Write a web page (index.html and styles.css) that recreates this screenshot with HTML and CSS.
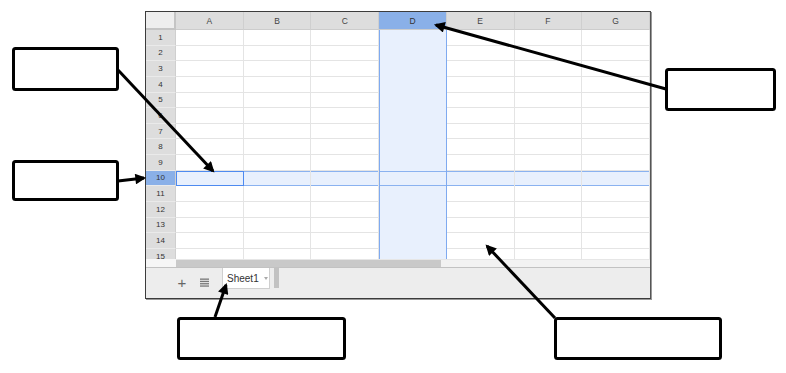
FILE: index.html
```html
<!DOCTYPE html>
<html>
<head>
<meta charset="utf-8">
<link rel="stylesheet" href="styles.css">
</head>
<body>
<div class="page">
  <div class="sheet">
    <div class="grid">
      <div class="corner"></div>
      <div class="ch">A</div><div class="ch">B</div><div class="ch">C</div><div class="ch sel">D</div><div class="ch">E</div><div class="ch">F</div><div class="ch">G</div>

      <div class="rh">1</div><div class="c"></div><div class="c"></div><div class="c"></div><div class="c d"></div><div class="c"></div><div class="c"></div><div class="c"></div>
      <div class="rh">2</div><div class="c"></div><div class="c"></div><div class="c"></div><div class="c d"></div><div class="c"></div><div class="c"></div><div class="c"></div>
      <div class="rh">3</div><div class="c"></div><div class="c"></div><div class="c"></div><div class="c d"></div><div class="c"></div><div class="c"></div><div class="c"></div>
      <div class="rh">4</div><div class="c"></div><div class="c"></div><div class="c"></div><div class="c d"></div><div class="c"></div><div class="c"></div><div class="c"></div>
      <div class="rh">5</div><div class="c"></div><div class="c"></div><div class="c"></div><div class="c d"></div><div class="c"></div><div class="c"></div><div class="c"></div>
      <div class="rh">6</div><div class="c"></div><div class="c"></div><div class="c"></div><div class="c d"></div><div class="c"></div><div class="c"></div><div class="c"></div>
      <div class="rh">7</div><div class="c"></div><div class="c"></div><div class="c"></div><div class="c d"></div><div class="c"></div><div class="c"></div><div class="c"></div>
      <div class="rh">8</div><div class="c"></div><div class="c"></div><div class="c"></div><div class="c d"></div><div class="c"></div><div class="c"></div><div class="c"></div>
      <div class="rh">9</div><div class="c"></div><div class="c"></div><div class="c"></div><div class="c d"></div><div class="c"></div><div class="c"></div><div class="c"></div>
      <div class="rh sel">10</div><div class="c r active"></div><div class="c r"></div><div class="c r"></div><div class="c r d"></div><div class="c r"></div><div class="c r"></div><div class="c r"></div>
      <div class="rh">11</div><div class="c"></div><div class="c"></div><div class="c"></div><div class="c d"></div><div class="c"></div><div class="c"></div><div class="c"></div>
      <div class="rh">12</div><div class="c"></div><div class="c"></div><div class="c"></div><div class="c d"></div><div class="c"></div><div class="c"></div><div class="c"></div>
      <div class="rh">13</div><div class="c"></div><div class="c"></div><div class="c"></div><div class="c d"></div><div class="c"></div><div class="c"></div><div class="c"></div>
      <div class="rh">14</div><div class="c"></div><div class="c"></div><div class="c"></div><div class="c d"></div><div class="c"></div><div class="c"></div><div class="c"></div>
      <div class="rh">15</div><div class="c"></div><div class="c"></div><div class="c"></div><div class="c d"></div><div class="c"></div><div class="c"></div><div class="c"></div>
    </div>
    <div class="hscroll">
      <div class="hs-gap"></div>
      <div class="hs-track"><div class="hs-thumb"></div></div>
    </div>
    <div class="tabs">
      <span class="add">+</span>
      <span class="list">
        <svg width="9" height="9" viewBox="0 0 9 9"><rect x="0" y="0.5" width="9" height="1.3" fill="#777"/><rect x="0" y="2.8" width="9" height="1.3" fill="#777"/><rect x="0" y="5.1" width="9" height="1.3" fill="#777"/><rect x="0" y="7.4" width="9" height="1.3" fill="#777"/></svg>
      </span>
      <div class="tab"><span class="tab-name">Sheet1</span><span class="tab-caret"></span></div>
      <div class="tab-scroll"></div>
    </div>
  </div>

  <svg class="notes" width="786" height="373" viewBox="0 0 786 373">
    <defs>
      <marker id="ah" viewBox="0 0 10 10" refX="8" refY="5" markerWidth="4.2" markerHeight="3.6" orient="auto">
        <path d="M0,0 L10,5 L0,10 z" fill="#000"/>
      </marker>
    </defs>
    <g fill="#fff" stroke="#000" stroke-width="3">
      <rect x="13.5" y="48.5" width="104" height="41" rx="2"/>
      <rect x="13.5" y="161.5" width="104" height="38" rx="2"/>
      <rect x="666.5" y="69.5" width="108" height="40" rx="2"/>
      <rect x="178.5" y="318.5" width="166" height="40" rx="2"/>
      <rect x="555.5" y="318.5" width="165" height="40" rx="2"/>
    </g>
    <g stroke="#000" stroke-width="3" marker-end="url(#ah)">
      <line x1="118" y1="70" x2="213" y2="171"/>
      <line x1="118" y1="181" x2="144" y2="178"/>
      <line x1="666" y1="89" x2="436" y2="25"/>
      <line x1="215" y1="317" x2="226" y2="285"/>
      <line x1="555" y1="318" x2="487" y2="246"/>
    </g>
  </svg>
</div>
</body>
</html>
```

FILE: styles.css
```css
html, body {
  margin: 0;
  padding: 0;
  background: #fff;
}

.page {
  position: relative;
  width: 786px;
  height: 373px;
  overflow: hidden;
  font-family: "Liberation Sans", Arial, sans-serif;
}

.sheet {
  margin-left: 145px;
  margin-top: 11px;
  width: 506px;
  height: 288px;
  box-sizing: border-box;
  border: 1px solid #3c3c3c;
  border-right-color: #555;
  box-shadow: 1px 1px 0 #999;
  display: flex;
  flex-direction: column;
  background: #fff;
}

.grid {
  display: grid;
  grid-template-columns: 30px repeat(7, 1fr);
  grid-template-rows: 18px;
  grid-auto-rows: 15.63px;
  height: 247px;
  overflow: hidden;
  flex: none;
}

.corner {
  background: #eeeeee;
  border-right: 2px solid #c4c4c4;
  border-bottom: 2px solid #c4c4c4;
  box-sizing: border-box;
}

.ch {
  background: #dddddd;
  border-right: 1px solid #cfcfcf;
  border-bottom: 1px solid #cccccc;
  box-sizing: border-box;
  font-size: 8.5px;
  color: #444;
  display: flex;
  align-items: center;
  justify-content: center;
}

.ch.sel {
  background: #8ab0e8;
  color: #333;
}

.rh {
  background: #dddddd;
  border-right: 1px solid #cfcfcf;
  border-bottom: 1px solid #eaeaea;
  box-sizing: border-box;
  font-size: 8px;
  color: #333;
  display: flex;
  align-items: center;
  justify-content: center;
}

.rh.sel {
  background: #8ab0e8;
}

.c {
  border-right: 1px solid #e4e4e4;
  border-bottom: 1px solid #e4e4e4;
  box-sizing: border-box;
}

.c.d {
  background: #e8f0fd;
  border-right-color: #7faaf0;
  border-bottom: none;
  box-shadow: inset 1px 0 0 #7faaf0;
}

.c.r {
  background: #e8f0fd;
  border-bottom: none;
  box-shadow: inset 0 1px 0 #8ab2f0, inset 0 -1px 0 #8ab2f0;
}

.c.r.d {
  box-shadow: inset 1px 0 0 #7faaf0, inset 0 1px 0 #8ab2f0, inset 0 -1px 0 #8ab2f0;
}

.c.active {
  border: 1.5px solid #4d8af0;
  box-shadow: none;
}

.hscroll {
  display: flex;
  height: 8px;
  flex: none;
}

.hs-gap {
  width: 30px;
  background: #f6f6f6;
}

.hs-track {
  flex: 1;
  background: #f2f2f2;
  border-top: 1px solid #e6e6e6;
  box-sizing: border-box;
}

.hs-thumb {
  width: 265px;
  height: 100%;
  background: #c9c9c9;
}

.tabs {
  flex: 1;
  background: #ededed;
  border-top: 1px solid #c2c2c2;
  display: flex;
  align-items: flex-start;
  padding-left: 31px;
}

.add {
  font-size: 15px;
  line-height: 15px;
  color: #666;
  margin-top: 7px;
  width: 10px;
  text-align: center;
}

.list {
  margin-left: 13px;
  margin-top: 10px;
  display: flex;
}

.tab {
  margin-left: 13px;
  width: 48px;
  height: 21px;
  box-sizing: border-box;
  background: #fff;
  border: 1px solid #cfcfcf;
  border-top: none;
  display: flex;
  align-items: center;
  padding-left: 4px;
}

.tab-name {
  font-size: 10px;
  color: #333;
  margin-top: 1px;
}

.tab-caret {
  margin-left: 5px;
  width: 0;
  height: 0;
  border-left: 2.5px solid transparent;
  border-right: 2.5px solid transparent;
  border-top: 3px solid #aaa;
}

.tab-scroll {
  margin-left: 4px;
  width: 5px;
  height: 20px;
  background: #c2c2c2;
}

.notes {
  position: absolute;
  left: 0;
  top: 0;
  pointer-events: none;
}
```
